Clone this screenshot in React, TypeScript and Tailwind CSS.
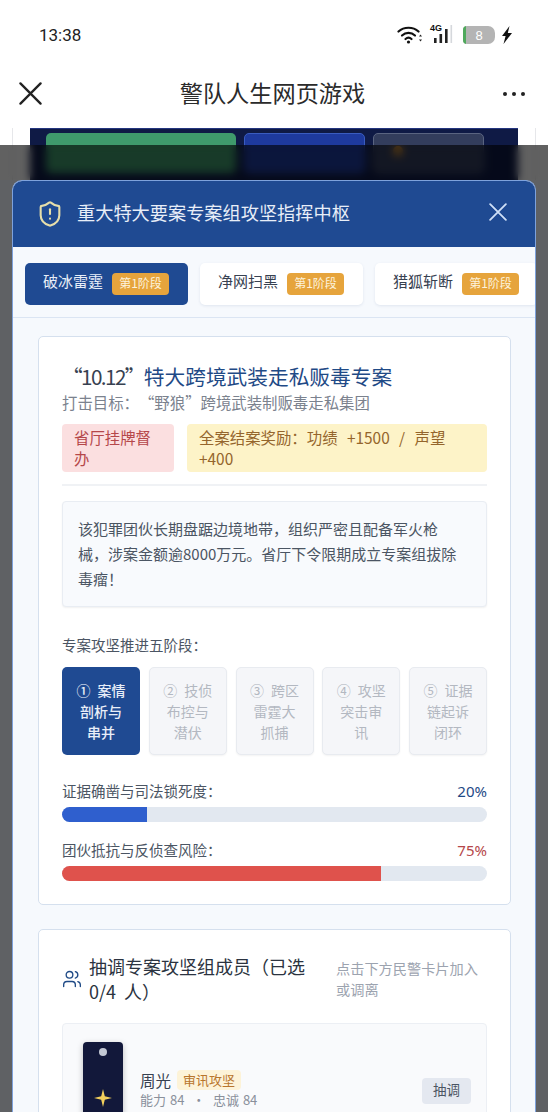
import { ShieldAlert, Users } from "lucide-react";

const cjk = "[font-family:'Noto_Sans_CJK_SC','Noto_Sans',sans-serif] [text-spacing-trim:space-all]";

function CloseIcon({ size, color, width }: { size: number; color: string; width: number }) {
  return (
    <svg width={size} height={size} viewBox="0 0 24 24" fill="none" stroke={color} strokeWidth={width} strokeLinecap="round">
      <path d="M1.5 1.5 22.5 22.5M22.5 1.5 1.5 22.5" />
    </svg>
  );
}

function StatusIcons() {
  return (
    <div className="flex items-center">
      {/* wifi */}
      <svg width="26" height="20" viewBox="0 0 26 20" fill="none" stroke="#111" strokeWidth="2.2" strokeLinecap="round">
        <path d="M1.5 6.5C7 1.5 16 1.5 21.5 6.5" />
        <path d="M5 10.5C8.8 7 14.2 7 18 10.5" />
        <path d="M8.5 14C10.4 12.3 12.6 12.3 14.5 14" />
        <circle cx="11.5" cy="17" r="1.6" fill="#111" stroke="none" />
        <path d="M22 11.5h3l-1.5-2zM22 14.5h3l-1.5 2z" fill="#222" stroke="none" />
      </svg>
      {/* signal */}
      <div className="relative ml-[7px] h-[20px] w-[24px]">
        <span className="absolute left-0 top-[-2px] text-[9px] font-bold leading-[10px] text-[#111] [font-family:'Liberation_Sans',sans-serif]">4G</span>
        <svg className="absolute left-0 top-0" width="24" height="20" viewBox="0 0 24 20" fill="#222">
          <rect x="4" y="13" width="2.6" height="5" />
          <rect x="9.5" y="9" width="2.6" height="9" />
          <rect x="15" y="4" width="2.6" height="14" />
          <rect x="20.5" y="0" width="1.6" height="18" fill="#d5d8dc" />
        </svg>
      </div>
      {/* battery */}
      <div className="relative ml-[9px] flex h-[18px] w-[32px] items-center justify-center overflow-hidden rounded-l-[4px] rounded-r-[7px] bg-[#b4b4b4]">
        <span className="absolute bottom-0 left-0 top-0 w-[3px] bg-[#4fa95c]" />
        <span className="text-[13px] leading-none text-white [font-family:'Liberation_Sans',sans-serif]">8</span>
      </div>
      {/* bolt */}
      <svg className="ml-[6px]" width="12" height="18" viewBox="0 0 12 18" fill="#111">
        <path d="M8.5 0 1 10h3.6L2.5 18 11 7H6.8z" />
      </svg>
    </div>
  );
}

function CaseTab({ name, active }: { name: string; active?: boolean }) {
  return (
    <div
      className={
        "flex h-[42px] w-[163px] shrink-0 items-center gap-[9px] rounded-[5px] pl-[18px] " +
        (active ? "bg-[#1f4a92] text-[#e8eef8]" : "bg-white text-[#374151] shadow-[0_1px_3px_rgba(30,60,120,0.1)]")
      }
    >
      <span className="pb-[6px] text-[15px] leading-none">{name}</span>
      <span className="flex h-[22px] w-[57px] items-center justify-center rounded-[4px] bg-[#e6a43c] pb-[1px] text-[12px] leading-none text-[#fdf3dc]">
        第1阶段
      </span>
    </div>
  );
}

function Stage({ text, active }: { text: string; active?: boolean }) {
  return (
    <div
      className={
        "flex h-[88px] w-[78px] items-center justify-center rounded-[5px] px-[12px] text-center text-[14px] leading-[21px] [word-spacing:4px] " +
        (active
          ? "bg-[#1f4a92] font-medium text-[#e8eef8]"
          : "border border-[#e8ebf0] bg-[#f5f6f9] text-[#b3b8c1] shadow-[0_1px_2px_rgba(0,0,0,0.05)]")
      }
    >
      <span>{text}</span>
    </div>
  );
}

function Meter({ label, value, bar, tone, className }: { label: string; value: number; bar: string; tone: string; className?: string }) {
  return (
    <div className={className}>
      <div className="flex h-[21px] items-center justify-between text-[14.5px] leading-none text-[#4b5563]">
        <span>{label}</span>
        <span className={"text-[15px] [font-family:'Noto_Sans',sans-serif] " + tone}>{value}%</span>
      </div>
      <div className="mt-[5px] h-[15px] overflow-hidden rounded-full bg-[#e2e8f0]">
        <div className={"h-full " + bar} style={{ width: `${value}%` }} />
      </div>
    </div>
  );
}

export default function App() {
  return (
    <div className={"h-[1112px] w-[548px] overflow-hidden bg-white " + cjk}>
      {/* status bar */}
      <div className="flex h-[70px] items-center justify-between pl-[39px] pr-[35px]">
        <span className="text-[17px] leading-none text-[#222] [font-family:'Roboto',sans-serif]">13:38</span>
        <StatusIcons />
      </div>

      {/* wechat nav */}
      <div className="flex h-[58px] items-center justify-between pb-[11px] pl-[19px] pr-[23px]">
        <CloseIcon size={23} color="#222" width={2.4} />
        <span className="pb-[2px] text-[23.2px] leading-none text-[#2b2b2b]">警队人生网页游戏</span>
        <div className="flex gap-[5px]">
          <span className="size-[4px] rounded-full bg-[#222]" />
          <span className="size-[4px] rounded-full bg-[#222]" />
          <span className="size-[4px] rounded-full bg-[#222]" />
        </div>
      </div>

      {/* page behind the dialog */}
      <div className="relative h-[52px] overflow-hidden">
        <div className="mx-[12px] h-full border-x border-[#e6e7ea] px-[17px]">
          <div className="flex h-full gap-[8px] border-t border-[#24357f] bg-[#0f1a45] pl-[16px] pt-[4px]">
            <div className="h-[40px] w-[190px] rounded-[5px] bg-[#3f9a6c]" />
            <div className="h-[40px] w-[121px] rounded-[5px] border border-[#3a5cc0] bg-[#1e3a9e]" />
            <div className="flex h-[40px] w-[111px] justify-center rounded-[5px] border border-[#5a6480] bg-[#333d5c] pr-[62px] pt-[12px]">
              <span className="size-[10px] rounded-full bg-[#d8902c]" />
            </div>
          </div>
        </div>
        <div className="absolute inset-x-0 bottom-0 top-[17px] bg-black/62 backdrop-blur-[4px]" />
      </div>

      {/* dialog */}
      <div className="h-full bg-[#5f6164] px-[12px]">
        <div className="overflow-hidden rounded-t-[10px] border border-b-0 border-[#7ea2dc] bg-[#f6f9fd]">
          <div className="flex h-[66px] items-center justify-between bg-[#1f4a92] pl-[23px] pr-[28px]">
            <div className="flex items-center gap-[13px]">
              <ShieldAlert size={28} color="#e6deaa" strokeWidth={1.8} />
              <span className="pb-[4px] text-[18.2px] leading-none text-[#e8eef8]">重大特大要案专案组攻坚指挥中枢</span>
            </div>
            <div className="pb-[4px]">
              <CloseIcon size={18} color="#cfe0f7" width={2.4} />
            </div>
          </div>

          {/* case tabs */}
          <div className="flex h-[71px] items-center gap-[12px] overflow-hidden border-b border-[#dbe5f3] pl-[12px] pt-[3px]">
            <CaseTab name="破冰雷霆" active />
            <CaseTab name="净网扫黑" />
            <CaseTab name="猎狐斩断" />
          </div>

          <div className="pl-[25px] pr-[24px] pt-[18px]">
            {/* case card */}
            <div className="h-[569px] rounded-[5px] border border-[#d5e0ee] bg-white px-[23px] pt-[25px]">
              <h2 className="text-[20.7px] leading-[28px] text-[#1f4a86]">
                <span className="tracking-[-1.6px] text-[#374151]">“10.12”</span>特大跨境武装走私贩毒专案
              </h2>
              <p className="mt-[2px] text-[15.4px] leading-[20px] text-[#7b828e]">打击目标：“野狼”跨境武装制贩毒走私集团</p>

              <div className="mt-[12px] flex gap-[13px] text-[15.4px] leading-[21px]">
                <div className="w-[112px] rounded-[4px] bg-[#fbdfe0] px-[12px] py-[3px] text-[#b5474a]">省厅挂牌督办</div>
                <div className="flex-1 rounded-[4px] bg-[#fdf3c8] px-[12px] py-[3px] text-[#94652c] [word-spacing:6px]">全案结案奖励：功绩 +1500 / 声望 +400</div>
              </div>

              <div className="mt-[12px] h-[2px] bg-[#f0f2f5]" />

              <div className="mt-[15px] rounded-[4px] border border-[#e9edf3] bg-[#f8fafd] pb-[15px] pl-[15px] pr-[21px] pt-[14px] text-[15px] leading-[25px] text-[#4b5563] shadow-[0_1px_2px_rgba(0,0,0,0.06)]">
                该犯罪团伙长期盘踞边境地带，组织严密且配备军火枪械，涉案金额逾8000万元。省厅下令限期成立专案组拔除毒瘤！
              </div>

              <p className="mt-[28px] text-[14.5px] leading-[20px] text-[#4b5563]">专案攻坚推进五阶段：</p>

              <div className="mt-[12px] flex justify-between">
                <Stage text="① 案情剖析与串并" active />
                <Stage text="② 技侦布控与潜伏" />
                <Stage text="③ 跨区雷霆大抓捕" />
                <Stage text="④ 攻坚突击审讯" />
                <Stage text="⑤ 证据链起诉闭环" />
              </div>

              <Meter className="mt-[26px]" label="证据确凿与司法锁死度：" value={20} bar="bg-[#2f5fce]" tone="text-[#1f4a86]" />
              <Meter className="mt-[18px]" label="团伙抵抗与反侦查风险：" value={75} bar="bg-[#df524c]" tone="text-[#b5474a]" />
            </div>

            {/* squad card */}
            <div className="mt-[24px] h-[300px] rounded-[5px] border border-[#d5e0ee] bg-white px-[23px] pt-[24px]">
              <div className="flex items-center">
                <Users size={20} color="#1f4a86" strokeWidth={1.6} className="shrink-0" />
                <h3 className="ml-[7px] w-[228px] text-[18px] leading-[25px] text-[#2b3340] [word-spacing:4px]">抽调专案攻坚组成员（已选 0/4 人）</h3>
                <p className="ml-[19px] flex-1 text-[14.2px] leading-[21px] text-[#9ca3af]">点击下方民警卡片加入或调离</p>
              </div>

              <div className="mt-[19px] flex h-[200px] rounded-[4px] border border-[#eceff4] bg-[#f9fafc] pl-[20px] pr-[15px] pt-[18px]">
                {/* epaulette */}
                <div className="flex h-[120px] w-[40px] shrink-0 flex-col items-center rounded-[4px] bg-[#12183a] pt-[6px] shadow-[0_2px_6px_rgba(0,0,0,0.25)]">
                  <span className="size-[8px] rounded-full bg-[#c3c8d4]" />
                  <svg className="mt-[33px]" width="18" height="18" viewBox="0 0 18 18" fill="#f2cf5c">
                    <path d="M9 0 10.8 7.2 18 9l-7.2 1.8L9 18l-1.8-7.2L0 9l7.2-1.8z" />
                  </svg>
                </div>
                <div className="ml-[17px] flex h-[60px] flex-1 items-start justify-between pt-[28px]">
                  <div>
                    <div className="flex items-center gap-[6px]">
                      <span className="text-[15.5px] leading-[20px] text-[#374151]">周光</span>
                      <span className="rounded-[4px] bg-[#fdf3d8] px-[6px] text-[13px] leading-[20px] text-[#b8752c]">审讯攻坚</span>
                    </div>
                    <div className="text-[13px] leading-[20px] text-[#8a909b] [word-spacing:1px]">能力 84 &nbsp;·&nbsp; 忠诚 84</div>
                  </div>
                  <span className="mt-[8px] flex h-[26px] w-[49px] items-center justify-center rounded-[4px] bg-[#e4e8f0] pb-[2px] text-[13.5px] leading-none text-[#4b5563]">抽调</span>
                </div>
              </div>
            </div>
          </div>
        </div>
      </div>
    </div>
  );
}
